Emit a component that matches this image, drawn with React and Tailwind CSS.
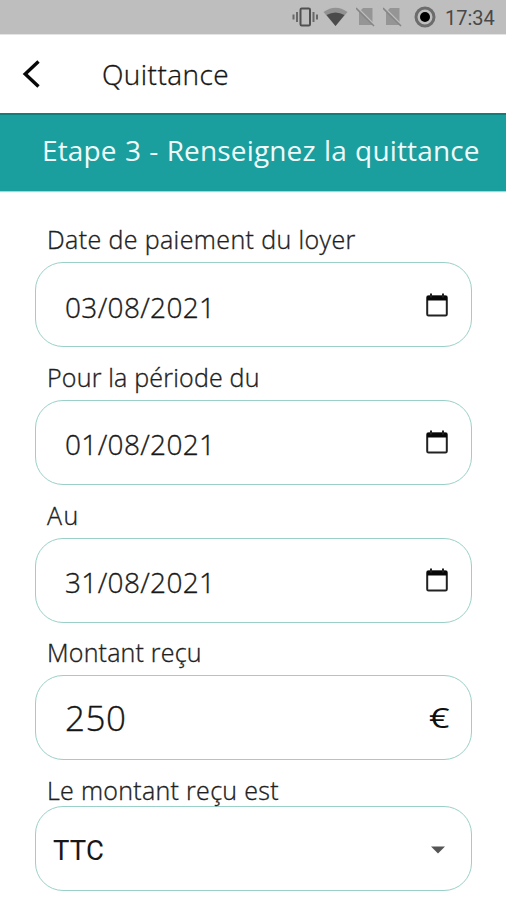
import React from "react";

const muli = "font-['Open_Sans','Noto_Sans',sans-serif] font-light [-webkit-text-stroke:0.35px_currentColor]";

function StatusBar() {
  return (
    <div className="flex h-[34px] items-center bg-[#bebebe] pl-[292px] text-[#505050]">
      <svg width="27" height="22" viewBox="0 0 27 22" fill="none" stroke="currentColor" strokeWidth="2">
        <rect x="8.5" y="2.5" width="9.5" height="17" rx="1.2" />
        <path d="M5 6v10M1.5 8.5v5M21.5 6v10M25 8.5v5" stroke="#686868" />
      </svg>
      <svg className="ml-[4px]" width="25" height="20" viewBox="0 0 25 20">
        <path d="M0.5 5Q12.5-3.5 24.5 5L12.5 19Z" fill="#929292" />
        <path d="M3.5 8Q12.5 3 21.5 8L12.5 19Z" fill="#4b4b4b" />
      </svg>
      {[0, 1].map((n) => (
        <svg key={n} className="ml-[8px]" width="19" height="20" viewBox="0 0 19 20">
          <path d="M7 1h9.5v17H3V5Z" fill="#959595" />
          <path d="M1.5 1L19 18.5" stroke="#bebebe" strokeWidth="1.8" />
          <path d="M0 1L18 19" stroke="#868686" strokeWidth="1.6" />
        </svg>
      ))}
      <svg className="ml-[12px]" width="22" height="22" viewBox="0 0 22 22">
        <circle cx="11" cy="11" r="9" fill="none" stroke="#6c6c6c" strokeWidth="3" />
        <circle cx="11" cy="11" r="5" fill="#000" />
      </svg>
      <span className="ml-[9px] mt-[2px] font-[Roboto,sans-serif] text-[20px] leading-[20px] text-[#484848]">17:34</span>
    </div>
  );
}

function CalendarIcon() {
  return (
    <svg className="mr-px" width="22" height="24" viewBox="0 0 22 24" fill="none">
      <rect x="1.2" y="3.2" width="19.6" height="19.4" rx="1.4" stroke="#222" strokeWidth="2" />
      <path d="M1 3h20v4.5H1Z" fill="#080808" />
      <path d="M5 0.5v4M17 0.5v4" stroke="#222" strokeWidth="2" />
    </svg>
  );
}

function Field({ label, labelStyle, compact, children }) {
  return (
    <div className={compact ? "h-[130px]" : "h-[137.8px]"}>
      <div className={`${muli} flex h-[46px] items-center whitespace-nowrap pl-[12px] text-[25px] leading-[34px] text-[#202020] ${compact ? "-mb-[7px]" : ""} ${labelStyle}`}>
        {label}
      </div>
      <div className="flex h-[85px] items-center justify-between rounded-[28px] border-[1.5px] border-[#9ad0c8] bg-white pr-[22px]">
        {children}
      </div>
    </div>
  );
}

function DateValue({ children }) {
  return (
    <>
      <span className={`${muli} ml-[29px] mt-[4px] text-[28px] leading-[38px] tracking-[0.35px] text-[#181818]`}>{children}</span>
      <CalendarIcon />
    </>
  );
}

export default function App() {
  return (
    <div className="h-[900px] w-[506px] overflow-hidden bg-white">
      <StatusBar />
      <header className="flex h-[79px] items-center border-t border-[#e4e4e4] bg-white">
        <svg className="ml-[22px]" width="19" height="28" viewBox="0 0 19 28" fill="none" stroke="#080808" strokeWidth="3.4">
          <path d="M16.5 1.5L3.2 14L16.5 26.5" />
        </svg>
        <h1 className={`${muli} ml-[61px] text-[28px] leading-[38px] tracking-[0.45px] text-[#151515]`}>Quittance</h1>
      </header>
      <div className="flex h-[78px] items-center border-t-2 border-[#127e7c] bg-[#1a9f9e] pb-[7px] pl-[42px] shadow-[0_1px_1px_#a4d6d5]">
        <h2 className="whitespace-nowrap font-['Open_Sans','Noto_Sans',sans-serif] text-[28px] leading-[38px] tracking-[0.15px] text-[#effafa] [word-spacing:0.8px]">Etape 3 - Renseignez la quittance</h2>
      </div>
      <main className="ml-[35px] mt-[25px] w-[437px]">
        <Field label="Date de paiement du loyer" labelStyle="tracking-[0.39px]"><DateValue>03/08/2021</DateValue></Field>
        <Field label="Pour la période du" labelStyle="tracking-[0.2px]"><DateValue>01/08/2021</DateValue></Field>
        <Field label="Au" labelStyle="tracking-[1.5px]"><DateValue>31/08/2021</DateValue></Field>
        <Field label="Montant reçu" labelStyle="tracking-[0.2px]">
          <span className={`${muli} ml-[29px] text-[35px] leading-[48px] tracking-[0.5px] text-[#151515]`}>250</span>
          <span className="origin-right scale-x-[1.33] font-['Open_Sans',sans-serif] text-[27px] leading-[38px] text-[#101010]">€</span>
        </Field>
        <Field label="Le montant reçu est" labelStyle="tracking-[0.3px]" compact>
          <span className="ml-[17px] mt-[4px] font-[Roboto,sans-serif] text-[27.5px] leading-[32px] tracking-[0.2px] text-[#181818]">TTC</span>
          <svg className="mr-[4px] mt-[3px]" width="14" height="8" viewBox="0 0 14 8" fill="#555"><path d="M0 0.5h14L7 7.5Z" /></svg>
        </Field>
      </main>
    </div>
  );
}
